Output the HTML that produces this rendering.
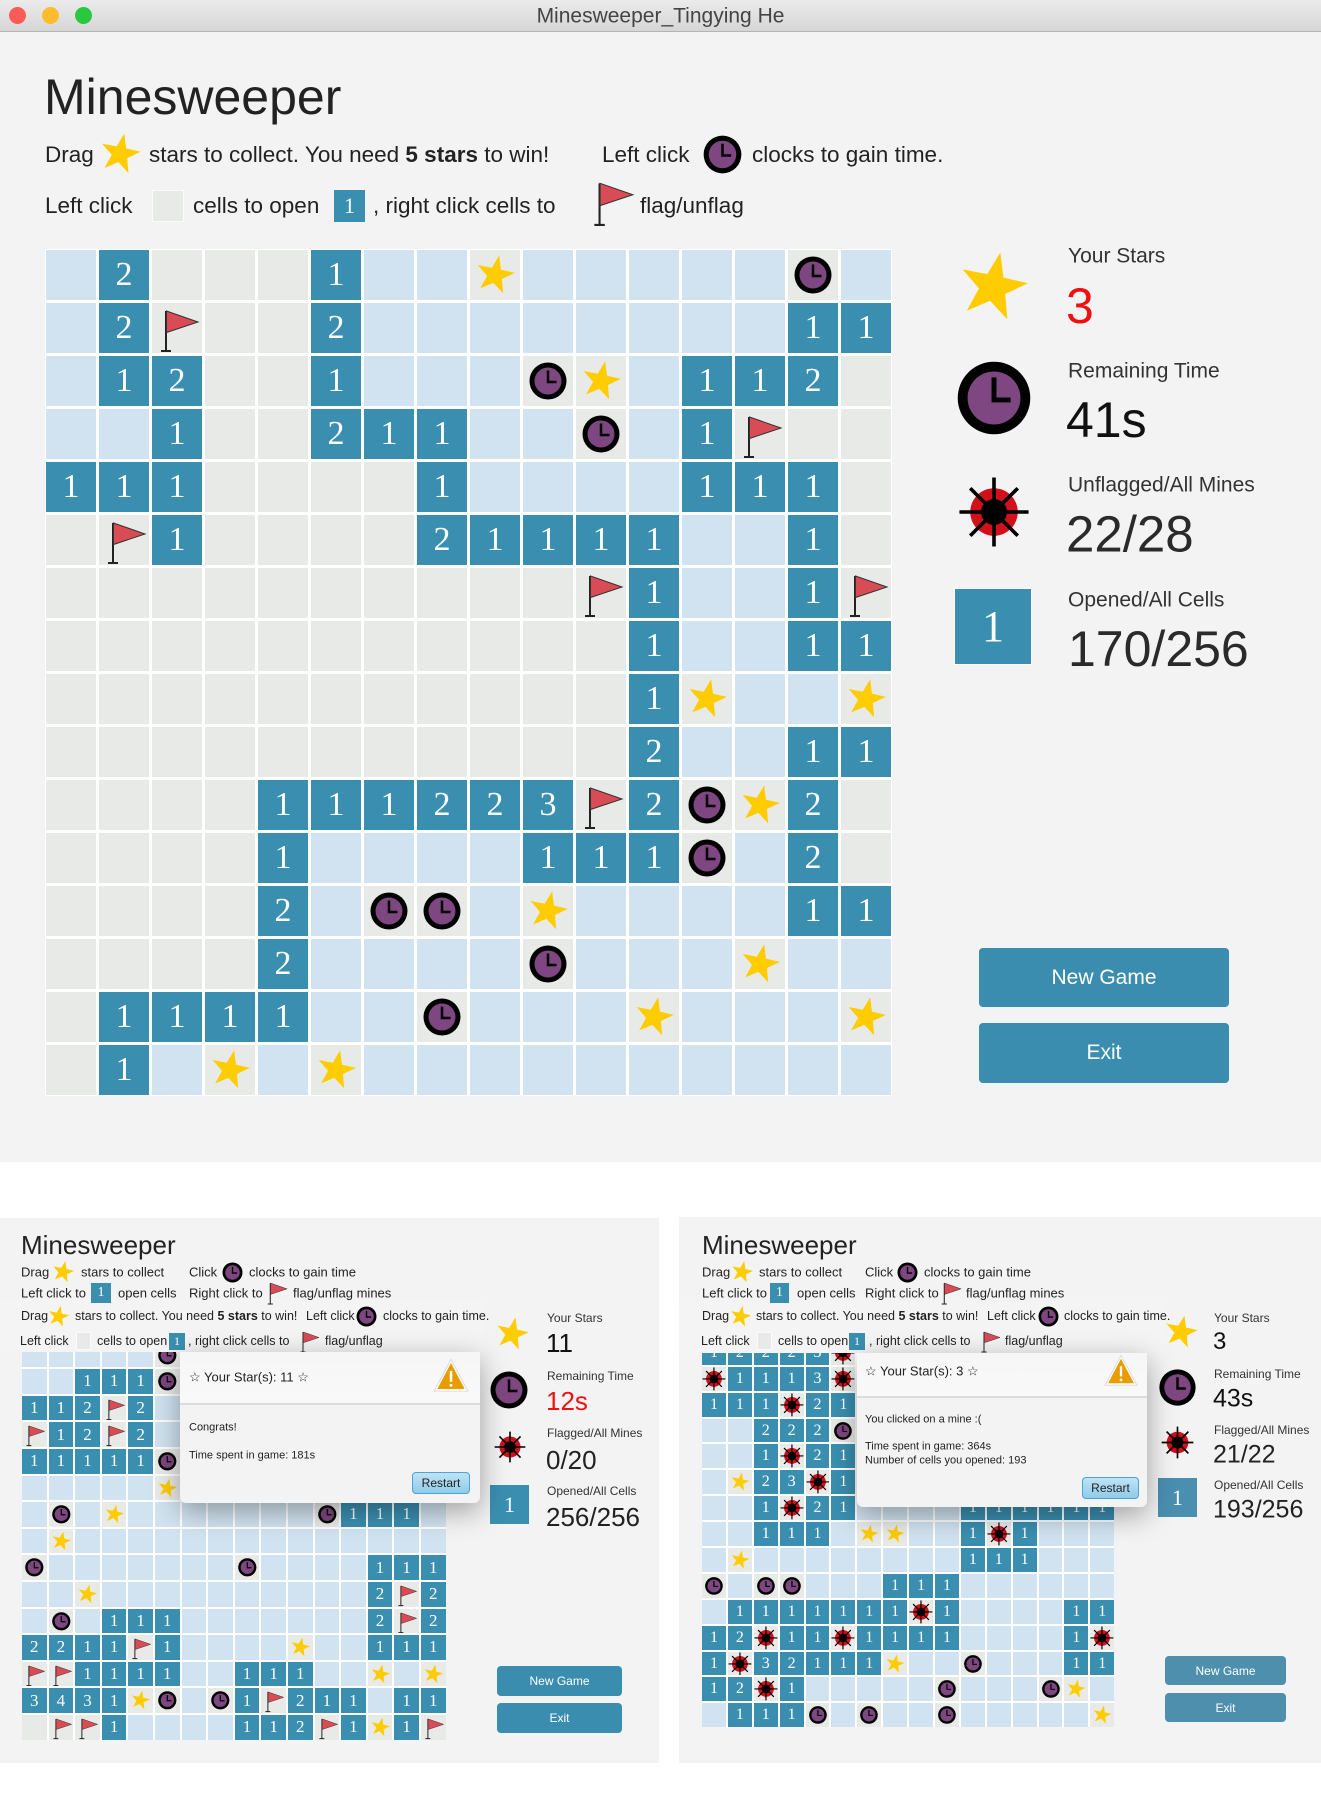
<!DOCTYPE html>
<html><head><meta charset="utf-8">
<style>
*{margin:0;padding:0;box-sizing:border-box}
body{width:1321px;height:1799px;position:relative;background:#fff;font-family:"Liberation Sans",Arial,sans-serif;color:#222;overflow:hidden}
.a{position:absolute;white-space:nowrap;line-height:1;transform:translateY(-50%)}
.ab{position:absolute}
.grid{position:absolute;display:grid;background:#fff}
.grid u,.grid s,.grid b{display:block;text-decoration:none;position:relative}
.grid u{background:#d1e3f0}
.grid s{background:#e8eae8}
.grid b{background:#3a8fb0;color:#fff;font-family:"Liberation Serif",serif;font-weight:normal;display:flex;align-items:center;justify-content:center}
.grid svg{position:absolute;left:0;top:0;width:100%;height:100%}
.g1{left:45px;top:249px;padding:1px;grid-template-columns:repeat(16,50px);grid-auto-rows:50px;gap:3px}
.g1 b{font-size:34px}
.g2{left:22px;top:1316px;grid-template-columns:repeat(16,24.6px);grid-auto-rows:24.6px;gap:2px}
.g2 b{font-size:17px}
.g3{left:702px;top:1315px;grid-template-columns:repeat(16,23.9px);grid-auto-rows:23.9px;gap:2px}
.g3 b{font-size:16px}
.btn{position:absolute;background:#3a8dae;color:#fff;border-radius:4px;display:flex;align-items:center;justify-content:center}
.tb{position:absolute;background:#3a8fb0;color:#fff;font-family:"Liberation Serif",serif;display:flex;align-items:center;justify-content:center}
.gb{position:absolute;background:#e8eae8;border:1px solid #fafafa}
.dlg{position:absolute;background:#f3f3f3;border-radius:0 0 6px 6px;box-shadow:0 8px 28px rgba(0,0,0,.35)}
.dh{position:absolute;left:0;right:0;top:0;background:linear-gradient(#f6f6f6,#f9f9f9);border-bottom:2px solid #dcdcdc}
.rs{position:absolute;background:linear-gradient(#bfe3f5,#8fcbe8);border:1px solid #4aa6d6;border-radius:4px;font-size:12px;display:flex;align-items:center;justify-content:center;color:#222}
.m{font-size:22.5px}
</style></head><body>
<svg width="0" height="0" style="position:absolute">
<symbol id="S" viewBox="0 0 100 100"><polygon transform="rotate(12 50 50)" points="50,10 59.4,37.1 88,37.6 65.2,54.9 73.5,82.4 50,66 26.5,82.4 34.8,54.9 12,37.6 40.6,37.1" fill="#ffcc00"/></symbol>
<symbol id="C" viewBox="0 0 100 100"><circle cx="50" cy="50" r="37" fill="#000"/><circle cx="50" cy="50" r="27" fill="#7f4781"/><path d="M50 29V52H67" stroke="#000" stroke-width="5" fill="none"/></symbol>
<symbol id="F" viewBox="0 0 100 100"><path d="M28 16V96M18 96H38" stroke="#222" stroke-width="4" fill="none"/><path d="M29 16L92 38L29 59Z" fill="#d94b55" stroke="#333" stroke-width="2"/></symbol>
<symbol id="M" viewBox="0 0 100 100"><circle cx="50" cy="50" r="33" fill="#d0101a"/><circle cx="50" cy="50" r="18" fill="#000"/><path d="M50 2V98M2 50H98M17 17L83 83M83 17L17 83" stroke="#000" stroke-width="5"/></symbol>
<symbol id="W" viewBox="0 0 100 100"><path d="M50 4L97 92H3Z" fill="#fff" stroke="#ddd" stroke-width="3" stroke-linejoin="round"/><path d="M50 14L88 86H12Z" fill="#e99c00"/><path d="M50 36V66" stroke="#fff" stroke-width="7"/><circle cx="50" cy="76" r="4" fill="#fff"/></symbol>
</svg>

<div class="ab" style="left:0;top:0;width:1321px;height:1162px;background:#f3f3f3"></div>
<div class="ab" style="left:0;top:0;width:1321px;height:32px;background:linear-gradient(#ebebeb,#d6d6d6);border-bottom:1px solid #b4b4b4"></div>
<div class="ab" style="left:9px;top:7px;width:17px;height:17px;border-radius:50%;background:#fc5b57"></div>
<div class="ab" style="left:42px;top:7px;width:17px;height:17px;border-radius:50%;background:#fdbc2e"></div>
<div class="ab" style="left:75px;top:7px;width:17px;height:17px;border-radius:50%;background:#29c840"></div>
<div class="a" style="left:0;width:1321px;text-align:center;top:16px;font-size:21px;color:#444">Minesweeper_Tingying He</div>

<div class="a" style="left:44px;top:97px;font-size:50px;color:#222">Minesweeper</div>
<div class="a m" style="left:45px;top:155px">Drag</div>
<svg class="ab" style="left:94px;top:128px;width:52px;height:52px"><use href="#S"/></svg>
<div class="a m" style="left:149px;top:155px">stars to collect. You need <b>5 stars</b> to win!</div>
<div class="a m" style="left:602px;top:155px">Left click</div>
<svg class="ab" style="left:697px;top:129px;width:51px;height:51px"><use href="#C"/></svg>
<div class="a m" style="left:752px;top:155px">clocks to gain time.</div>
<div class="a m" style="left:45px;top:206px">Left click</div>
<div class="gb" style="left:152px;top:190px;width:32px;height:32px"></div>
<div class="a m" style="left:193px;top:206px">cells to open</div>
<div class="tb" style="left:334px;top:190px;width:31px;height:32px;font-size:22px">1</div>
<div class="a m" style="left:373px;top:206px">, right click cells to</div>
<svg class="ab" style="left:585px;top:175px;width:52px;height:52px"><use href="#F"/></svg>
<div class="a m" style="left:640px;top:206px">flag/unflag</div>

<div class="grid g1">
<u></u><b>2</b><s></s><s></s><s></s><b>1</b><u></u><u></u><s><svg><use href="#S"/></svg></s><u></u><u></u><u></u><u></u><u></u><s><svg><use href="#C"/></svg></s><u></u>
<u></u><b>2</b><s><svg><use href="#F"/></svg></s><s></s><s></s><b>2</b><u></u><u></u><u></u><u></u><u></u><u></u><u></u><u></u><b>1</b><b>1</b>
<u></u><b>1</b><b>2</b><s></s><s></s><b>1</b><u></u><u></u><u></u><s><svg><use href="#C"/></svg></s><s><svg><use href="#S"/></svg></s><u></u><b>1</b><b>1</b><b>2</b><s></s>
<u></u><u></u><b>1</b><s></s><s></s><b>2</b><b>1</b><b>1</b><u></u><u></u><s><svg><use href="#C"/></svg></s><u></u><b>1</b><s><svg><use href="#F"/></svg></s><s></s><s></s>
<b>1</b><b>1</b><b>1</b><s></s><s></s><s></s><s></s><b>1</b><u></u><u></u><u></u><u></u><b>1</b><b>1</b><b>1</b><s></s>
<s></s><s><svg><use href="#F"/></svg></s><b>1</b><s></s><s></s><s></s><s></s><b>2</b><b>1</b><b>1</b><b>1</b><b>1</b><u></u><u></u><b>1</b><s></s>
<s></s><s></s><s></s><s></s><s></s><s></s><s></s><s></s><s></s><s></s><s><svg><use href="#F"/></svg></s><b>1</b><u></u><u></u><b>1</b><s><svg><use href="#F"/></svg></s>
<s></s><s></s><s></s><s></s><s></s><s></s><s></s><s></s><s></s><s></s><s></s><b>1</b><u></u><u></u><b>1</b><b>1</b>
<s></s><s></s><s></s><s></s><s></s><s></s><s></s><s></s><s></s><s></s><s></s><b>1</b><s><svg><use href="#S"/></svg></s><u></u><u></u><s><svg><use href="#S"/></svg></s>
<s></s><s></s><s></s><s></s><s></s><s></s><s></s><s></s><s></s><s></s><s></s><b>2</b><u></u><u></u><b>1</b><b>1</b>
<s></s><s></s><s></s><s></s><b>1</b><b>1</b><b>1</b><b>2</b><b>2</b><b>3</b><s><svg><use href="#F"/></svg></s><b>2</b><s><svg><use href="#C"/></svg></s><s><svg><use href="#S"/></svg></s><b>2</b><s></s>
<s></s><s></s><s></s><s></s><b>1</b><u></u><u></u><u></u><u></u><b>1</b><b>1</b><b>1</b><s><svg><use href="#C"/></svg></s><u></u><b>2</b><s></s>
<s></s><s></s><s></s><s></s><b>2</b><u></u><s><svg><use href="#C"/></svg></s><s><svg><use href="#C"/></svg></s><u></u><s><svg><use href="#S"/></svg></s><u></u><u></u><u></u><u></u><b>1</b><b>1</b>
<s></s><s></s><s></s><s></s><b>2</b><u></u><u></u><u></u><u></u><s><svg><use href="#C"/></svg></s><u></u><u></u><u></u><s><svg><use href="#S"/></svg></s><u></u><u></u>
<s></s><b>1</b><b>1</b><b>1</b><b>1</b><u></u><u></u><s><svg><use href="#C"/></svg></s><u></u><u></u><u></u><s><svg><use href="#S"/></svg></s><u></u><u></u><u></u><s><svg><use href="#S"/></svg></s>
<s></s><b>1</b><u></u><s><svg><use href="#S"/></svg></s><u></u><s><svg><use href="#S"/></svg></s><u></u><u></u><u></u><u></u><u></u><u></u><u></u><u></u><u></u><u></u>
</div>

<svg class="ab" style="left:949px;top:243px;width:88px;height:88px"><use href="#S"/></svg>
<div class="a" style="left:1068px;top:256px;font-size:21px;color:#333">Your Stars</div>
<div class="a" style="left:1066px;top:306px;font-size:50px;color:#f01010">3</div>
<svg class="ab" style="left:945px;top:349px;width:98px;height:98px"><use href="#C"/></svg>
<div class="a" style="left:1068px;top:371px;font-size:21px;color:#333">Remaining Time</div>
<div class="a" style="left:1066px;top:420px;font-size:50px;color:#111">41s</div>
<svg class="ab" style="left:958px;top:476px;width:72px;height:72px"><use href="#M"/></svg>
<div class="a" style="left:1068px;top:485px;font-size:21px;color:#333">Unflagged/All Mines</div>
<div class="a" style="left:1066px;top:534px;font-size:51px;color:#2a2a2a">22/28</div>
<div class="tb" style="left:954px;top:588px;width:78px;height:77px;font-size:44px;border:1px solid #fff">1</div>
<div class="a" style="left:1068px;top:600px;font-size:21px;color:#333">Opened/All Cells</div>
<div class="a" style="left:1068px;top:649px;font-size:50px;color:#2a2a2a">170/256</div>
<div class="btn" style="left:979px;top:948px;width:250px;height:59px;font-size:21px">New Game</div>
<div class="btn" style="left:979px;top:1023px;width:250px;height:60px;font-size:21px">Exit</div>

<div class="ab" style="left:0;top:1218px;width:659px;height:545px;background:#f3f3f3"></div>
<div class="grid g2">
<u></u><u></u><u></u><u></u><u></u><s><svg><use href="#C"/></svg></s><u></u><u></u><u></u><u></u><u></u><u></u><u></u><u></u><u></u><u></u>
<u></u><u></u><u></u><u></u><u></u><s><svg><use href="#C"/></svg></s><u></u><u></u><u></u><u></u><u></u><u></u><u></u><u></u><u></u><u></u>
<u></u><u></u><b>1</b><b>1</b><b>1</b><s><svg><use href="#C"/></svg></s><u></u><u></u><u></u><u></u><u></u><u></u><u></u><u></u><u></u><u></u>
<b>1</b><b>1</b><b>2</b><s><svg><use href="#F"/></svg></s><b>2</b><u></u><u></u><u></u><u></u><u></u><u></u><u></u><u></u><u></u><u></u><u></u>
<s><svg><use href="#F"/></svg></s><b>1</b><b>2</b><s><svg><use href="#F"/></svg></s><b>2</b><u></u><u></u><u></u><u></u><u></u><u></u><u></u><u></u><u></u><u></u><u></u>
<b>1</b><b>1</b><b>1</b><b>1</b><b>1</b><s><svg><use href="#C"/></svg></s><u></u><u></u><u></u><u></u><u></u><u></u><u></u><u></u><u></u><u></u>
<u></u><u></u><u></u><u></u><u></u><s><svg><use href="#S"/></svg></s><u></u><u></u><u></u><u></u><u></u><u></u><u></u><u></u><u></u><u></u>
<u></u><s><svg><use href="#C"/></svg></s><u></u><s><svg><use href="#S"/></svg></s><u></u><u></u><u></u><u></u><u></u><u></u><u></u><s><svg><use href="#C"/></svg></s><b>1</b><b>1</b><b>1</b><u></u>
<u></u><s><svg><use href="#S"/></svg></s><u></u><u></u><u></u><u></u><u></u><u></u><u></u><u></u><u></u><u></u><u></u><u></u><u></u><u></u>
<s><svg><use href="#C"/></svg></s><u></u><u></u><u></u><u></u><u></u><u></u><u></u><s><svg><use href="#C"/></svg></s><u></u><u></u><u></u><u></u><b>1</b><b>1</b><b>1</b>
<u></u><u></u><s><svg><use href="#S"/></svg></s><u></u><u></u><u></u><u></u><u></u><u></u><u></u><u></u><u></u><u></u><b>2</b><s><svg><use href="#F"/></svg></s><b>2</b>
<u></u><s><svg><use href="#C"/></svg></s><u></u><b>1</b><b>1</b><b>1</b><u></u><u></u><u></u><u></u><u></u><u></u><u></u><b>2</b><s><svg><use href="#F"/></svg></s><b>2</b>
<b>2</b><b>2</b><b>1</b><b>1</b><s><svg><use href="#F"/></svg></s><b>1</b><u></u><u></u><u></u><u></u><s><svg><use href="#S"/></svg></s><u></u><u></u><b>1</b><b>1</b><b>1</b>
<s><svg><use href="#F"/></svg></s><s><svg><use href="#F"/></svg></s><b>1</b><b>1</b><b>1</b><b>1</b><u></u><u></u><b>1</b><b>1</b><b>1</b><u></u><u></u><s><svg><use href="#S"/></svg></s><u></u><s><svg><use href="#S"/></svg></s>
<b>3</b><b>4</b><b>3</b><b>1</b><s><svg><use href="#S"/></svg></s><s><svg><use href="#C"/></svg></s><u></u><s><svg><use href="#C"/></svg></s><b>1</b><s><svg><use href="#F"/></svg></s><b>2</b><b>1</b><b>1</b><u></u><b>1</b><b>1</b>
<s></s><s><svg><use href="#F"/></svg></s><s><svg><use href="#F"/></svg></s><b>1</b><u></u><u></u><u></u><u></u><b>1</b><b>1</b><b>2</b><s><svg><use href="#F"/></svg></s><b>1</b><s><svg><use href="#S"/></svg></s><b>1</b><s><svg><use href="#F"/></svg></s>
</div>
<div class="ab" style="left:0;top:1300px;width:484px;height:52px;background:#f4f4f4"></div>
<div class="a" style="left:21px;top:1245px;font-size:26px">Minesweeper</div>
<div class="a" style="left:21px;top:1272px;font-size:13px">Drag</div>
<svg class="ab" style="left:49px;top:1258px;width:28px;height:28px"><use href="#S"/></svg>
<div class="a" style="left:81px;top:1272px;font-size:13px">stars to collect</div>
<div class="a" style="left:189px;top:1272px;font-size:13px">Click</div>
<svg class="ab" style="left:219px;top:1259px;width:27px;height:27px"><use href="#C"/></svg>
<div class="a" style="left:249px;top:1272px;font-size:13px">clocks to gain time</div>
<div class="a" style="left:21px;top:1293px;font-size:13px">Left click to</div>
<div class="tb" style="left:91px;top:1283px;width:20px;height:20px;font-size:14px">1</div>
<div class="a" style="left:118px;top:1293px;font-size:13px">open cells</div>
<div class="a" style="left:189px;top:1293px;font-size:13px">Right click to</div>
<svg class="ab" style="left:263px;top:1279px;width:26px;height:26px"><use href="#F"/></svg>
<div class="a" style="left:293px;top:1293px;font-size:13px">flag/unflag mines</div>
<div class="a" style="left:21px;top:1316px;font-size:12.5px">Drag</div>
<svg class="ab" style="left:45px;top:1303px;width:27px;height:27px"><use href="#S"/></svg>
<div class="a" style="left:75px;top:1316px;font-size:12.5px">stars to collect. You need <b>5 stars</b> to win!</div>
<div class="a" style="left:306px;top:1316px;font-size:12.5px">Left click</div>
<svg class="ab" style="left:353px;top:1303px;width:27px;height:27px"><use href="#C"/></svg>
<div class="a" style="left:383px;top:1316px;font-size:12.5px">clocks to gain time.</div>
<div class="a" style="left:20px;top:1341px;font-size:12.5px">Left click</div>
<div class="gb" style="left:76px;top:1332px;width:15px;height:18px"></div>
<div class="a" style="left:97px;top:1341px;font-size:12.5px">cells to open</div>
<div class="tb" style="left:169px;top:1333px;width:16px;height:17px;font-size:12px">1</div>
<div class="a" style="left:188px;top:1341px;font-size:12.5px">, right click cells to</div>
<svg class="ab" style="left:296px;top:1328px;width:25px;height:25px"><use href="#F"/></svg>
<div class="a" style="left:325px;top:1341px;font-size:12.5px">flag/unflag</div>

<svg class="ab" style="left:491px;top:1313px;width:42px;height:42px"><use href="#S"/></svg>
<div class="a" style="left:547px;top:1318px;font-size:12px;color:#333">Your Stars</div>
<div class="a" style="left:546px;top:1343px;font-size:26px;color:#111">11</div>
<svg class="ab" style="left:484px;top:1365px;width:50px;height:50px"><use href="#C"/></svg>
<div class="a" style="left:547px;top:1376px;font-size:12px;color:#333">Remaining Time</div>
<div class="a" style="left:546px;top:1401px;font-size:26px;color:#f01010">12s</div>
<svg class="ab" style="left:494px;top:1431px;width:32px;height:32px"><use href="#M"/></svg>
<div class="a" style="left:547px;top:1433px;font-size:12px;color:#333">Flagged/All Mines</div>
<div class="a" style="left:546px;top:1460px;font-size:26px;color:#222">0/20</div>
<div class="tb" style="left:490px;top:1485px;width:39px;height:39px;font-size:22px">1</div>
<div class="a" style="left:547px;top:1491px;font-size:12px;color:#333">Opened/All Cells</div>
<div class="a" style="left:546px;top:1517px;font-size:26px;color:#222">256/256</div>
<div class="btn" style="left:497px;top:1666px;width:125px;height:30px;font-size:12px">New Game</div>
<div class="btn" style="left:497px;top:1703px;width:125px;height:30px;font-size:12px">Exit</div>

<div class="dlg" style="left:180px;top:1352px;width:300px;height:151px">
<div class="dh" style="height:53px"></div>
<div class="a" style="left:9px;top:25px;font-size:13px">☆ Your Star(s): 11 ☆</div>
<svg class="ab" style="left:252px;top:6px;width:38px;height:36px"><use href="#W"/></svg>
<div class="a" style="left:9px;top:76px;font-size:11px">Congrats!</div>
<div class="a" style="left:9px;top:104px;font-size:11px">Time spent in game: 181s</div>
<div class="rs" style="left:232px;top:120px;width:58px;height:22px">Restart</div>
</div>

<div class="ab" style="left:679px;top:1217px;width:642px;height:546px;background:#f3f3f3"></div>
<div class="grid g3">
<u></u><u></u><u></u><u></u><u></u><u></u><u></u><u></u><u></u><u></u><u></u><u></u><u></u><u></u><u></u><u></u>
<b>1</b><b>2</b><b>2</b><b>2</b><b>3</b><s><svg><use href="#M"/></svg></s><u></u><u></u><u></u><u></u><u></u><u></u><u></u><u></u><u></u><u></u>
<s><svg><use href="#M"/></svg></s><b>1</b><b>1</b><b>1</b><b>3</b><s><svg><use href="#M"/></svg></s><u></u><u></u><u></u><u></u><u></u><u></u><u></u><u></u><u></u><u></u>
<b>1</b><b>1</b><b>1</b><s><svg><use href="#M"/></svg></s><b>2</b><b>1</b><u></u><u></u><u></u><u></u><u></u><u></u><u></u><u></u><u></u><u></u>
<u></u><u></u><b>2</b><b>2</b><b>2</b><s><svg><use href="#C"/></svg></s><u></u><u></u><u></u><u></u><u></u><u></u><u></u><u></u><u></u><u></u>
<u></u><u></u><b>1</b><s><svg><use href="#M"/></svg></s><b>2</b><b>1</b><u></u><u></u><u></u><u></u><u></u><u></u><u></u><u></u><u></u><u></u>
<u></u><s><svg><use href="#S"/></svg></s><b>2</b><b>3</b><s><svg><use href="#M"/></svg></s><b>1</b><u></u><u></u><u></u><u></u><u></u><u></u><u></u><u></u><u></u><u></u>
<u></u><u></u><b>1</b><s><svg><use href="#M"/></svg></s><b>2</b><b>1</b><u></u><u></u><u></u><u></u><b>1</b><b>1</b><b>1</b><b>1</b><b>1</b><b>1</b>
<u></u><u></u><b>1</b><b>1</b><b>1</b><u></u><s><svg><use href="#S"/></svg></s><s><svg><use href="#S"/></svg></s><u></u><u></u><b>1</b><s><svg><use href="#M"/></svg></s><b>1</b><u></u><u></u><u></u>
<u></u><s><svg><use href="#S"/></svg></s><u></u><u></u><u></u><u></u><u></u><u></u><u></u><u></u><b>1</b><b>1</b><b>1</b><u></u><u></u><u></u>
<s><svg><use href="#C"/></svg></s><u></u><s><svg><use href="#C"/></svg></s><s><svg><use href="#C"/></svg></s><u></u><u></u><u></u><b>1</b><b>1</b><b>1</b><u></u><u></u><u></u><u></u><u></u><u></u>
<u></u><b>1</b><b>1</b><b>1</b><b>1</b><b>1</b><b>1</b><b>1</b><s><svg><use href="#M"/></svg></s><b>1</b><u></u><u></u><u></u><u></u><b>1</b><b>1</b>
<b>1</b><b>2</b><s><svg><use href="#M"/></svg></s><b>1</b><b>1</b><s><svg><use href="#M"/></svg></s><b>1</b><b>1</b><b>1</b><b>1</b><u></u><u></u><u></u><u></u><b>1</b><s><svg><use href="#M"/></svg></s>
<b>1</b><s><svg><use href="#M"/></svg></s><b>3</b><b>2</b><b>1</b><b>1</b><b>1</b><s><svg><use href="#S"/></svg></s><u></u><u></u><s><svg><use href="#C"/></svg></s><u></u><u></u><u></u><b>1</b><b>1</b>
<b>1</b><b>2</b><s><svg><use href="#M"/></svg></s><b>1</b><u></u><u></u><u></u><u></u><u></u><s><svg><use href="#C"/></svg></s><u></u><u></u><u></u><s><svg><use href="#C"/></svg></s><s><svg><use href="#S"/></svg></s><u></u>
<u></u><b>1</b><b>1</b><b>1</b><s><svg><use href="#C"/></svg></s><u></u><s><svg><use href="#C"/></svg></s><u></u><u></u><s><svg><use href="#C"/></svg></s><u></u><u></u><u></u><u></u><u></u><s><svg><use href="#S"/></svg></s>
</div>
<div class="ab" style="left:679px;top:1302px;width:486px;height:51px;background:#f4f4f4"></div>
<div class="a" style="left:702px;top:1245px;font-size:26px">Minesweeper</div>
<div class="a" style="left:702px;top:1272px;font-size:13px">Drag</div>
<svg class="ab" style="left:728px;top:1258px;width:28px;height:28px"><use href="#S"/></svg>
<div class="a" style="left:759px;top:1272px;font-size:13px">stars to collect</div>
<div class="a" style="left:865px;top:1272px;font-size:13px">Click</div>
<svg class="ab" style="left:894px;top:1259px;width:27px;height:27px"><use href="#C"/></svg>
<div class="a" style="left:924px;top:1272px;font-size:13px">clocks to gain time</div>
<div class="a" style="left:702px;top:1293px;font-size:13px">Left click to</div>
<div class="tb" style="left:770px;top:1283px;width:19px;height:20px;font-size:14px">1</div>
<div class="a" style="left:797px;top:1293px;font-size:13px">open cells</div>
<div class="a" style="left:865px;top:1293px;font-size:13px">Right click to</div>
<svg class="ab" style="left:937px;top:1279px;width:26px;height:26px"><use href="#F"/></svg>
<div class="a" style="left:966px;top:1293px;font-size:13px">flag/unflag mines</div>
<div class="a" style="left:702px;top:1316px;font-size:12.5px">Drag</div>
<svg class="ab" style="left:727px;top:1303px;width:27px;height:27px"><use href="#S"/></svg>
<div class="a" style="left:756px;top:1316px;font-size:12.5px">stars to collect. You need <b>5 stars</b> to win!</div>
<div class="a" style="left:987px;top:1316px;font-size:12.5px">Left click</div>
<svg class="ab" style="left:1035px;top:1303px;width:27px;height:27px"><use href="#C"/></svg>
<div class="a" style="left:1064px;top:1316px;font-size:12.5px">clocks to gain time.</div>
<div class="a" style="left:701px;top:1341px;font-size:12.5px">Left click</div>
<div class="gb" style="left:757px;top:1332px;width:15px;height:18px"></div>
<div class="a" style="left:778px;top:1341px;font-size:12.5px">cells to open</div>
<div class="tb" style="left:849px;top:1333px;width:16px;height:17px;font-size:12px">1</div>
<div class="a" style="left:869px;top:1341px;font-size:12.5px">, right click cells to</div>
<svg class="ab" style="left:977px;top:1328px;width:25px;height:25px"><use href="#F"/></svg>
<div class="a" style="left:1005px;top:1341px;font-size:12.5px">flag/unflag</div>

<svg class="ab" style="left:1160px;top:1311px;width:42px;height:42px"><use href="#S"/></svg>
<div class="a" style="left:1214px;top:1318px;font-size:12px;color:#333">Your Stars</div>
<div class="a" style="left:1213px;top:1342px;font-size:24px;color:#111">3</div>
<svg class="ab" style="left:1153px;top:1363px;width:49px;height:49px"><use href="#C"/></svg>
<div class="a" style="left:1214px;top:1374px;font-size:12px;color:#333">Remaining Time</div>
<div class="a" style="left:1213px;top:1399px;font-size:25px;color:#111">43s</div>
<svg class="ab" style="left:1161px;top:1426px;width:33px;height:33px"><use href="#M"/></svg>
<div class="a" style="left:1214px;top:1430px;font-size:12px;color:#333">Flagged/All Mines</div>
<div class="a" style="left:1213px;top:1455px;font-size:25px;color:#222">21/22</div>
<div class="tb" style="left:1158px;top:1478px;width:39px;height:39px;font-size:22px;background:#4a8fb0">1</div>
<div class="a" style="left:1214px;top:1485px;font-size:12px;color:#333">Opened/All Cells</div>
<div class="a" style="left:1213px;top:1510px;font-size:25px;color:#222">193/256</div>
<div class="btn" style="left:1165px;top:1656px;width:121px;height:29px;font-size:12px;background:#4e8fae">New Game</div>
<div class="btn" style="left:1165px;top:1693px;width:121px;height:29px;font-size:12px;background:#4e8fae">Exit</div>

<div class="dlg" style="left:857px;top:1353px;width:290px;height:154px">
<div class="dh" style="height:45px"></div>
<div class="a" style="left:8px;top:18px;font-size:13px">☆ Your Star(s): 3 ☆</div>
<svg class="ab" style="left:246px;top:1px;width:36px;height:34px"><use href="#W"/></svg>
<div class="a" style="left:8px;top:67px;font-size:11px">You clicked on a mine :(</div>
<div class="a" style="left:8px;top:94px;font-size:11px">Time spent in game: 364s</div>
<div class="a" style="left:8px;top:108px;font-size:11px">Number of cells you opened: 193</div>
<div class="rs" style="left:225px;top:124px;width:57px;height:22px">Restart</div>
</div>
</body></html>
